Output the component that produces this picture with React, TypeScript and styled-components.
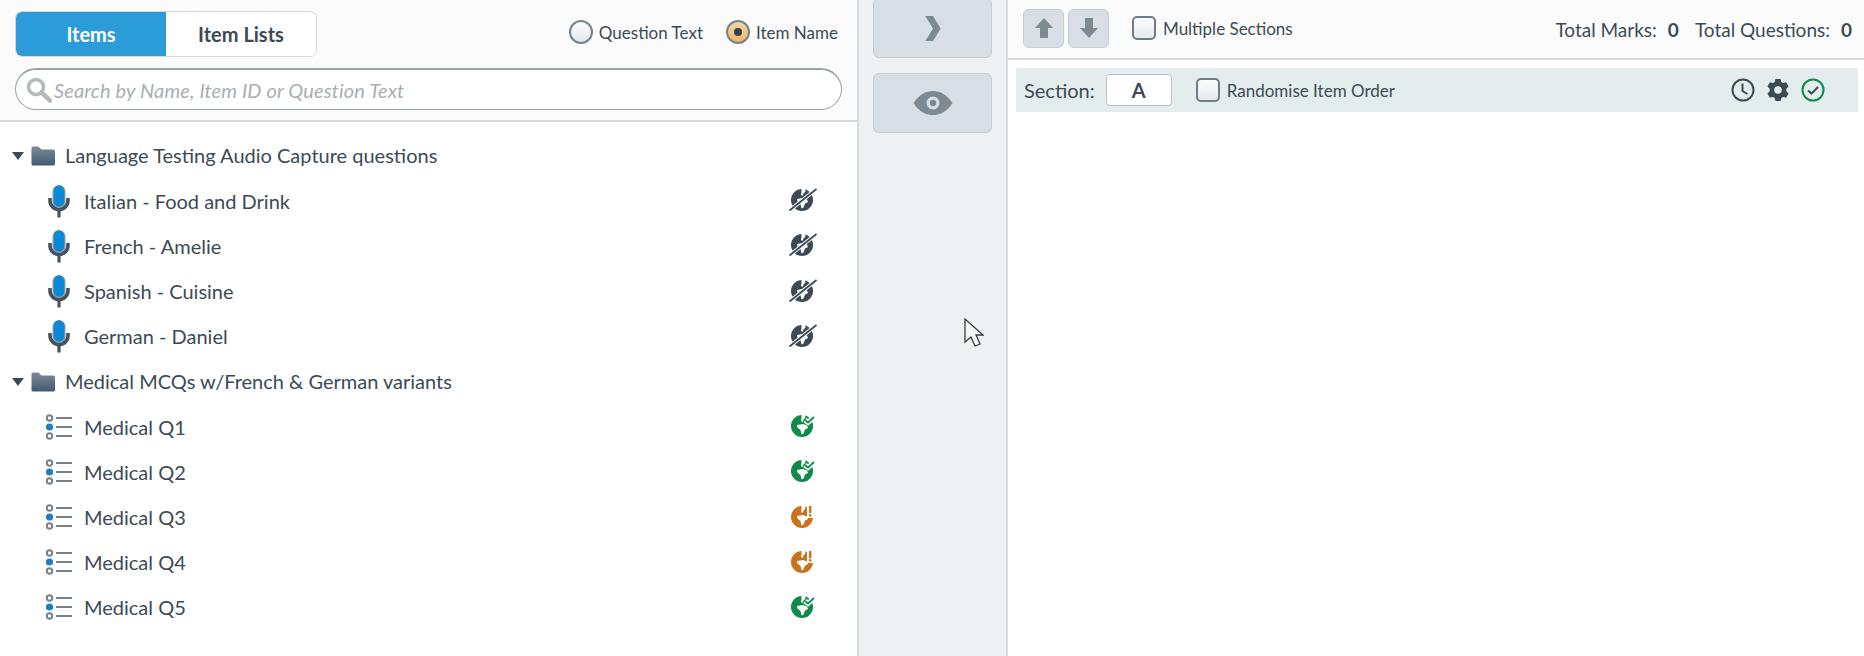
import styled, { createGlobalStyle } from "styled-components";

const GlobalStyle = createGlobalStyle`
  html, body {
    margin: 0;
    padding: 0;
    background: #fff;
  }
  body {
    font-family: "Lato", "Open Sans", sans-serif;
    color: #3d4a56;
  }
`;

type RowItem = {
  name: string;
  status: "off" | "ok" | "warn";
};

type Folder = {
  title: string;
  kind: "audio" | "mcq";
  items: RowItem[];
};

const folders: Folder[] = [
  {
    title: "Language Testing Audio Capture questions",
    kind: "audio",
    items: [
      { name: "Italian - Food and Drink", status: "off" },
      { name: "French - Amelie", status: "off" },
      { name: "Spanish - Cuisine", status: "off" },
      { name: "German - Daniel", status: "off" },
    ],
  },
  {
    title: "Medical MCQs w/French & German variants",
    kind: "mcq",
    items: [
      { name: "Medical Q1", status: "ok" },
      { name: "Medical Q2", status: "ok" },
      { name: "Medical Q3", status: "warn" },
      { name: "Medical Q4", status: "warn" },
      { name: "Medical Q5", status: "ok" },
    ],
  },
];

function MicIcon() {
  return (
    <svg width="24" height="34" viewBox="0 0 24 34">
      <path d="M3 14v2.500a9 9 0 0 0 18 0V14" fill="none" stroke="#46535f" strokeWidth="3.600" />
      <rect x="10.400" y="26" width="3.200" height="7.500" fill="#46535f" />
      <rect x="5.500" y="1" width="13" height="23" rx="6.500" fill="#7f98ab" />
      <rect x="6.800" y="1.500" width="10.400" height="21" rx="5.200" fill="#0c89d6" />
    </svg>
  );
}

function ListIcon() {
  return (
    <svg width="28" height="26" viewBox="0 0 28 26">
      <circle cx="4.500" cy="4" r="2.700" fill="none" stroke="#76818a" strokeWidth="2" />
      <circle cx="4.500" cy="13" r="3.600" fill="#1c7fc4" />
      <circle cx="4.500" cy="22" r="2.700" fill="none" stroke="#76818a" strokeWidth="2" />
      <path d="M11 4h16M11 13h16M11 22h16" stroke="#76818a" strokeWidth="2" />
    </svg>
  );
}

function FolderIcon() {
  return (
    <svg width="24" height="20" viewBox="0 0 24 20">
      <defs>
        <linearGradient id="folderFill" x1="0" y1="0" x2="0" y2="1">
          <stop offset="0" stopColor="#7d8b97" />
          <stop offset="1" stopColor="#415a75" />
        </linearGradient>
      </defs>
      <path
        d="M0.500 2a1.500 1.500 0 0 1 1.500-1.500h5.500l3 3h11.500a2 2 0 0 1 2 2V18a1.500 1.500 0 0 1-1.500 1.500H2A1.500 1.500 0 0 1 .5 18z"
        fill="url(#folderFill)"
      />
    </svg>
  );
}

function GlobeStatus({ status }: { status: RowItem["status"] }) {
  const color = status === "ok" ? "#0f8a4b" : status === "warn" ? "#c8721c" : "#3d4a56";
  return (
    <svg width="30" height="26" viewBox="0 0 30 26">
      <circle cx="14" cy="14" r="11" fill={color} />
      <path
        d="M13.500 3l3.500 0 .5 2.500-2 2-1 2.500-1.500-1 .5-3zM9 13l6-1 4 1.500 1 2.500-3 1.500-1.500 4-2 1-1-4.500-3-2.500z"
        fill="#fff"
      />
      {status === "off" && (
        <>
          <path d="M1.500 24.500L28.500 3" stroke="#fff" strokeWidth="3.600" />
          <path d="M1.500 24.500L28.500 3" stroke={color} strokeWidth="1.800" />
        </>
      )}
      {status === "ok" && (
        <>
          <path d="M17 8l3 2.500 6-5.500" fill="none" stroke="#fff" strokeWidth="5" />
          <path d="M17 8l3 2.500 6-5.500" fill="none" stroke={color} strokeWidth="1.800" />
        </>
      )}
      {status === "warn" && (
        <>
          <rect x="19" y="0" width="6.500" height="15" fill="#fff" />
          <rect x="21" y="3" width="2.400" height="7" fill={color} />
          <rect x="21" y="11.200" width="2.400" height="2.400" fill={color} />
        </>
      )}
    </svg>
  );
}

function SearchIcon() {
  return (
    <svg width="26" height="26" viewBox="0 0 26 26">
      <circle cx="10" cy="10" r="7.500" fill="none" stroke="#b6babc" strokeWidth="3.600" />
      <path d="M15.500 15.500L24 23.500" stroke="#b6babc" strokeWidth="4.500" strokeLinecap="round" />
    </svg>
  );
}

function ClockIcon() {
  return (
    <svg width="24" height="24" viewBox="0 0 24 24">
      <circle cx="12" cy="12" r="10.500" fill="none" stroke="#3d4a56" strokeWidth="2" />
      <path d="M11.500 5.500V13l5 3" fill="none" stroke="#3d4a56" strokeWidth="2" />
    </svg>
  );
}

function GearIcon() {
  return (
    <svg width="24" height="24" viewBox="0 0 24 24">
      <path
        fillRule="evenodd"
        fill="#3d4a56"
        d="M9.500 1h5l.8 3.100 1.700 1 3.100-.9 2.500 4.300-2.300 2.200v2.600l2.300 2.200-2.500 4.300-3.100-.9-1.700 1-.8 3.100h-5l-.8-3.100-1.700-1-3.100.9L1.400 15.500l2.300-2.200v-2.600L1.400 8.500l2.500-4.300 3.100.9 1.700-1zM12 8.200a3.800 3.800 0 1 0 0 7.600 3.800 3.800 0 0 0 0-7.600z"
      />
    </svg>
  );
}

function CheckCircleIcon() {
  return (
    <svg width="24" height="24" viewBox="0 0 24 24">
      <circle cx="12" cy="12" r="10.500" fill="none" stroke="#0f8a4b" strokeWidth="2" />
      <path d="M7 12.500l3.500 3.200L17 9" fill="none" stroke="#3d4a56" strokeWidth="2" />
    </svg>
  );
}

function Tree() {
  return (
    <TreeList>
      {folders.map((folder) => (
        <div key={folder.title}>
          <FolderRow>
            <Caret />
            <FolderIcon />
            <FolderTitle>{folder.title}</FolderTitle>
          </FolderRow>
          {folder.items.map((item) => (
            <ItemRow key={item.name}>
              <IconSlot>{folder.kind === "audio" ? <MicIcon /> : <ListIcon />}</IconSlot>
              <ItemName>{item.name}</ItemName>
              <StatusSlot>
                <GlobeStatus status={item.status} />
              </StatusSlot>
            </ItemRow>
          ))}
        </div>
      ))}
    </TreeList>
  );
}

export default function App() {
  return (
    <Page>
      <GlobalStyle />
      <LeftPanel>
        <LeftHeader>
          <TopLine>
            <Segments>
              <Segment $active>Items</Segment>
              <Segment>Item Lists</Segment>
            </Segments>
            <RadioGroup>
              <RadioLabel>
                <Radio />
                Question Text
              </RadioLabel>
              <RadioLabel>
                <Radio $checked />
                Item Name
              </RadioLabel>
            </RadioGroup>
          </TopLine>
          <SearchBox>
            <SearchIcon />
            <SearchInput placeholder="Search by Name, Item ID or Question Text" />
          </SearchBox>
        </LeftHeader>
        <Tree />
      </LeftPanel>

      <MiddleColumn>
        <SideButton $first>
          <svg width="18" height="25" viewBox="0 0 18 26">
            <path d="M1 0h8l8 13-8 13H1l8-13z" fill="#7d8a92" />
          </svg>
        </SideButton>
        <SideButton>
          <svg width="44" height="26" viewBox="0 0 44 28">
            <path fillRule="evenodd" fill="#7d8a92" d="M1 14C7 5 14 1 22 1s15 4 21 13c-6 9-13 13-21 13S7 23 1 14zM22 7a7 7 0 1 0 0 14 7 7 0 0 0 0-14z" />
            <circle cx="22" cy="14" r="3.500" fill="#7d8a92" />
          </svg>
        </SideButton>
      </MiddleColumn>

      <RightPanel>
        <RightHeader>
          <ArrowButton>
            <svg width="20" height="22" viewBox="0 0 20 22">
              <path d="M10 1l9 10h-5v10H6V11H1z" fill="#7d8a92" />
            </svg>
          </ArrowButton>
          <ArrowButton>
            <svg width="20" height="22" viewBox="0 0 20 22">
              <path d="M10 21L1 11h5V1h8v10h5z" fill="#7d8a92" />
            </svg>
          </ArrowButton>
          <CheckLabel $gap={19}>
            <CheckBox />
            Multiple Sections
          </CheckLabel>
          <Totals>
            <TotalLabel>Total Marks:</TotalLabel>
            <TotalValue>0</TotalValue>
            <TotalLabel>Total Questions:</TotalLabel>
            <TotalValue>0</TotalValue>
          </Totals>
        </RightHeader>
        <SectionBar>
          <SectionLabel>Section:</SectionLabel>
          <SectionInput>A</SectionInput>
          <CheckLabel $gap={24}>
            <CheckBox />
            Randomise Item Order
          </CheckLabel>
          <SectionIcons>
            <ClockIcon />
            <GearIcon />
            <CheckCircleIcon />
          </SectionIcons>
        </SectionBar>
      </RightPanel>

      <Pointer>
        <svg width="20" height="30" viewBox="0 0 20 30">
          <path d="M1 1v23l6-5 4 9 5-2-4-9h7z" fill="#f4f6f8" stroke="#3c3c3c" strokeWidth="1.300" />
        </svg>
      </Pointer>
    </Page>
  );
}

const Page = styled.div`
  position: relative;
  display: flex;
  width: 1864px;
  height: 656px;
  overflow: hidden;
  background: #fff;
`;

const LeftPanel = styled.div`
  width: 857px;
  flex: none;
`;

const LeftHeader = styled.div`
  height: 122px;
  box-sizing: border-box;
  padding: 11px 15px 0 15px;
  background: #fbfbfb;
  border-bottom: 2px solid #d5dbdf;
`;

const TopLine = styled.div`
  display: flex;
  align-items: center;
  justify-content: space-between;
  height: 46px;
`;

const Segments = styled.div`
  display: flex;
  width: 302px;
  height: 46px;
  box-sizing: border-box;
  border: 1px solid #d5d9dc;
  border-radius: 7px;
  overflow: hidden;
  background: #fff;
`;

const Segment = styled.div<{ $active?: boolean }>`
  flex: 1;
  display: flex;
  align-items: center;
  justify-content: center;
  font-size: 20px;
  font-weight: 700;
  background: ${(p) => (p.$active ? "#2b9cd8" : "#fff")};
  color: ${(p) => (p.$active ? "#fff" : "#3d4a56")};
`;

const RadioGroup = styled.div`
  display: flex;
  align-items: center;
  gap: 23px;
  margin-right: 4px;
  margin-top: -4px;
`;

const RadioLabel = styled.div`
  display: flex;
  align-items: center;
  gap: 6px;
  font-size: 17px;
`;

const Radio = styled.span<{ $checked?: boolean }>`
  display: block;
  position: relative;
  width: 24px;
  height: 24px;
  box-sizing: border-box;
  border-radius: 50%;
  border: 2px solid #76838d;
  background: ${(p) =>
    p.$checked
      ? "linear-gradient(#f0d6ac, #f4b561)"
      : "linear-gradient(#fbfcfc, #e4e8eb)"};

  &::after {
    content: "";
    display: ${(p) => (p.$checked ? "block" : "none")};
    position: absolute;
    left: 6px;
    top: 6px;
    width: 8px;
    height: 8px;
    border-radius: 50%;
    background: #2f4152;
  }
`;

const SearchBox = styled.div`
  display: flex;
  align-items: center;
  gap: 2px;
  height: 42px;
  margin-top: 11px;
  padding-left: 10px;
  box-sizing: border-box;
  background: #fff;
  border: 1px solid #98a3aa;
  border-top-width: 2px;
  border-radius: 21px;
`;

const SearchInput = styled.input`
  flex: 1;
  border: none;
  outline: none;
  background: transparent;
  padding: 0;
  font: italic 20px "Lato", "Open Sans", sans-serif;
  letter-spacing: 0.12px;
  color: #3d4a56;

  &::placeholder {
    color: #a9aeb2;
    opacity: 1;
  }
`;

const TreeList = styled.div`
  padding-top: 11px;
`;

const FolderRow = styled.div`
  display: flex;
  align-items: center;
  height: 45.2px;
  padding-left: 12px;
`;

const Caret = styled.span`
  width: 0;
  height: 0;
  margin-right: 7px;
  border-left: 6.500px solid transparent;
  border-right: 6.500px solid transparent;
  border-top: 8px solid #3d4a56;
`;

const FolderTitle = styled.span`
  margin-left: 10px;
  margin-top: -2px;
  font-size: 20px;
`;

const ItemRow = styled.div`
  display: flex;
  align-items: center;
  height: 45.2px;
  padding-left: 43px;
  padding-right: 39px;
`;

const IconSlot = styled.div`
  display: flex;
  align-items: center;
  justify-content: center;
  width: 32px;
  margin-right: 9px;
`;

const ItemName = styled.span`
  font-size: 20px;
`;

const StatusSlot = styled.div`
  display: flex;
  margin-left: auto;
  margin-top: -3px;
`;

const MiddleColumn = styled.div`
  width: 151px;
  flex: none;
  box-sizing: border-box;
  display: flex;
  flex-direction: column;
  align-items: center;
  gap: 15px;
  background: #edf1f4;
  border-left: 2px solid #d5dbdf;
  border-right: 2px solid #d5dbdf;
`;

const SideButton = styled.div<{ $first?: boolean }>`
  display: flex;
  align-items: center;
  justify-content: center;
  width: 119px;
  height: 60px;
  margin-top: ${(p) => (p.$first ? "-2px" : "0")};
  box-sizing: border-box;
  background: #d7dfe5;
  border: 1px solid #c3ccd2;
  border-radius: 6px;
`;

const RightPanel = styled.div`
  flex: 1;
  min-width: 0;
`;

const RightHeader = styled.div`
  display: flex;
  align-items: center;
  height: 60px;
  box-sizing: border-box;
  padding: 0 12px 2px 15px;
  background: #fbfbfb;
  border-bottom: 2px solid #d5dbdf;
`;

const ArrowButton = styled.div`
  display: flex;
  align-items: center;
  justify-content: center;
  width: 41px;
  height: 39px;
  margin-right: 4px;
  box-sizing: border-box;
  background: #d7dfe5;
  border: 1px solid #c3ccd2;
  border-radius: 6px;
`;

const CheckLabel = styled.div<{ $gap: number }>`
  display: flex;
  align-items: center;
  gap: 7px;
  margin-left: ${(p) => p.$gap}px;
  font-size: 17px;
`;

const CheckBox = styled.span`
  display: block;
  width: 24px;
  height: 24px;
  box-sizing: border-box;
  border: 2px solid #6f7d87;
  border-radius: 5px;
  background: linear-gradient(#fbfcfc, #e6eaed);
`;

const Totals = styled.div`
  display: flex;
  align-items: center;
  margin-left: auto;
  margin-top: 2px;
  font-size: 19px;
`;

const TotalLabel = styled.span`
  margin-right: 11px;
`;

const TotalValue = styled.span`
  font-weight: 700;
  margin-right: 16px;

  &:last-child {
    margin-right: 0;
  }
`;

const SectionBar = styled.div`
  display: flex;
  align-items: center;
  height: 44px;
  margin: 8px 6px 0 8px;
  padding: 0 33px 0 8px;
  background: #e4eded;
`;

const SectionLabel = styled.span`
  font-size: 20px;
`;

const SectionInput = styled.div`
  display: flex;
  align-items: center;
  justify-content: center;
  width: 66px;
  height: 32px;
  margin-left: 11px;
  box-sizing: border-box;
  background: #fff;
  border: 1px solid #b9c2c7;
  border-radius: 4px;
  font-size: 20px;
  font-weight: 700;
`;

const SectionIcons = styled.div`
  display: flex;
  align-items: center;
  gap: 11px;
  margin-left: auto;
`;

const Pointer = styled.div`
  position: absolute;
  left: 964px;
  top: 318px;
  display: flex;
`;
